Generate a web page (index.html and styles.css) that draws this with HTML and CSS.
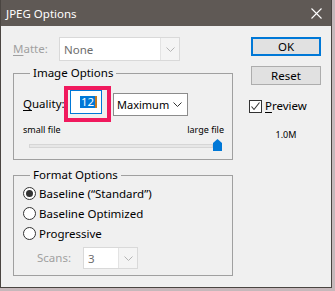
FILE: index.html
```html
<!DOCTYPE html>
<html lang="en">
<head>
  <meta charset="UTF-8">
  <title>JPEG Options</title>
  <link rel="stylesheet" href="styles.css">
</head>
<body>
  <div class="window">
    <div class="titlebar">
      <span class="title">JPEG Options</span>
      <svg class="close" width="11" height="11" viewBox="0 0 11 11"><path d="M0.5 0.5L10.5 10.5M10.5 0.5L0.5 10.5" stroke="#fff" stroke-width="1.1" fill="none"/></svg>
    </div>

    <div class="content">
      <div class="left">
        <!-- Matte (disabled) -->
        <div class="matte-row">
          <span class="label disabled"><u>M</u>atte:</span>
          <div class="combo combo-off matte">
            <span class="field">None</span>
            <span class="arrow"><svg width="9" height="5" viewBox="0 0 9 5"><path d="M0.5 0.5L4.5 4.5L8.5 0.5" stroke="#b4b4b4" fill="none"/></svg></span>
          </div>
        </div>

        <fieldset class="group image-options">
          <legend>Image Options</legend>
          <div class="quality-row">
            <span class="label"><u>Q</u>uality:</span>
            <span class="highlight">
              <span class="num-input"><span class="sel">12</span><span class="caret"></span></span>
            </span>
            <div class="combo quality">
              <span>Maximum</span>
              <svg width="9" height="5" viewBox="0 0 9 5"><path d="M0.5 0.5L4.5 4.5L8.5 0.5" stroke="#333" fill="none"/></svg>
            </div>
          </div>
          <div class="slider-labels"><span>small file</span><span>large file</span></div>
          <div class="slider">
            <div class="track"></div>
            <svg class="thumb" width="9" height="12" viewBox="0 0 9 12"><path d="M0 4L4.5 0L9 4V12H0Z" fill="#0078d7"/></svg>
          </div>
        </fieldset>

        <fieldset class="group format-options">
          <legend>Format Options</legend>
          <div class="radio-row"><span class="radio checked"></span>Baseline (“Standard”)</div>
          <div class="radio-row"><span class="radio"></span>Baseline Optimized</div>
          <div class="radio-row"><span class="radio"></span>Progressive</div>
          <div class="scans-row">
            <span class="label disabled">Scans:</span>
            <div class="combo combo-off scans">
              <span class="field">3</span>
              <span class="arrow"><svg width="9" height="5" viewBox="0 0 9 5"><path d="M0.5 0.5L4.5 4.5L8.5 0.5" stroke="#b4b4b4" fill="none"/></svg></span>
            </div>
          </div>
        </fieldset>
      </div>

      <div class="right">
        <button class="btn btn-default">OK</button>
        <button class="btn">Reset</button>
        <div class="check-row">
          <span class="checkbox"><svg width="11" height="11" viewBox="0 0 11 11"><path d="M1.5 5.5L4 8.5L9.5 1.5" stroke="#333" stroke-width="1.1" fill="none"/></svg></span>
          <span><u>P</u>review</span>
        </div>
        <div class="size">1.0M</div>
      </div>
    </div>
  </div>
</body>
</html>
```

FILE: styles.css
```css
* { box-sizing: border-box; margin: 0; padding: 0; }

body {
  background: #c6b8bb;
  font-family: "Noto Sans", "Segoe UI", sans-serif;
  font-size: 11.5px;
  color: #000;
}

u { text-decoration: underline; text-underline-offset: 2px; }

.window {
  width: 332px;
  height: 288px;
  background: #f0f0f0;
  border: 1px solid #4a4541;
  border-top: 0;
}

.titlebar {
  height: 26px;
  background: #5f5955;
  color: #fff;
  display: flex;
  align-items: center;
  justify-content: space-between;
  padding: 0 9px 0 5px;
}

.title { font-size: 11.5px; }

.content {
  display: flex;
  gap: 18px;
  padding: 11px 0 0 12px;
}

.left { width: 220px; }

.right {
  width: 70px;
  display: flex;
  flex-direction: column;
}

.label { line-height: 16px; }
.disabled { color: #a0a0a0; }

/* combo boxes */
.combo {
  display: flex;
  align-items: center;
  background: #fff;
}

.combo-off {
  border: 1px solid #d9d9d9;
  background: #f4f4f4;
  color: #6d6d6d;
}

.combo-off .field {
  flex: 1;
  align-self: stretch;
  background: #fff;
  border-right: 1px solid #e3e3e3;
  padding-left: 4px;
  display: flex;
  align-items: center;
}

.combo-off .arrow {
  width: 18px;
  display: flex;
  justify-content: center;
}

.matte-row {
  display: flex;
  align-items: center;
  height: 24px;
}

.matte-row .label { width: 46px; }

.matte { width: 121px; height: 24px; }

/* group boxes */
.group {
  border: 1px solid #a0a0a0;
  padding: 0 8px 0 9px;
}

.group legend {
  margin-left: 7px;
  padding: 0 3px;
  line-height: 16px;
}

.image-options {
  margin-top: 4px;
  padding-bottom: 8px;
}

.quality-row {
  display: flex;
  align-items: center;
  margin-top: 5px;
}

.quality-row .label { width: 41px; }

.highlight {
  display: flex;
  border: 4px solid #f0195d;
  padding: 0 5px 4px 2px;
}

.num-input {
  width: 32px;
  height: 24px;
  border: 1px solid #0078d7;
  background: #fff;
  display: flex;
  align-items: center;
  padding-left: 9px;
}

.sel {
  background: #0078d7;
  color: #fff;
  line-height: 12px;
  padding: 0 1px;
}

.caret {
  width: 2px;
  height: 12px;
  background: #c8781e;
}

.quality {
  width: 75px;
  height: 23px;
  margin-left: 2px;
  border: 1px solid #8c8c8c;
  padding: 0 5px 0 3px;
  justify-content: space-between;
  font-size: 11px;
}

.slider-labels {
  display: flex;
  justify-content: space-between;
  font-size: 9px;
  line-height: 12px;
  margin-top: 2px;
}

.slider {
  display: flex;
  align-items: center;
  margin: 3px 2px 0 6px;
  height: 12px;
}

.track {
  flex: 1;
  height: 4px;
  background: #e7e7e7;
  border: 1px solid #d6d6d6;
  margin-top: 2px;
}

.thumb { display: block; }

.format-options {
  margin-top: 7px;
  padding-bottom: 6px;
}

.radio-row {
  display: flex;
  align-items: center;
  height: 20px;
}

.radio {
  width: 13px;
  height: 13px;
  border: 1px solid #333;
  border-radius: 50%;
  background: #fff;
  margin-right: 3px;
  display: flex;
  align-items: center;
  justify-content: center;
}

.radio.checked::after {
  content: "";
  width: 7px;
  height: 7px;
  border-radius: 50%;
  background: #333;
}

.scans-row {
  display: flex;
  align-items: center;
  margin-top: 4px;
  padding-left: 14px;
}

.scans-row .label { width: 46px; }

.scans { width: 55px; height: 22px; }

/* buttons */
.btn {
  height: 19px;
  border: 1px solid #adadad;
  background: #e1e1e1;
  font: inherit;
  line-height: 16px;
}

.btn + .btn { margin-top: 10px; }

.btn-default { border: 2px solid #0078d7; }

.check-row {
  display: flex;
  align-items: center;
  margin: 13px 0 0 -2px;
  line-height: 16px;
}

.checkbox {
  width: 13px;
  height: 13px;
  border: 1px solid #333;
  background: #fff;
  margin-right: 3px;
  display: flex;
  align-items: center;
  justify-content: center;
}

.size {
  margin-top: 15px;
  text-align: center;
  font-size: 9px;
  line-height: 12px;
}
```
